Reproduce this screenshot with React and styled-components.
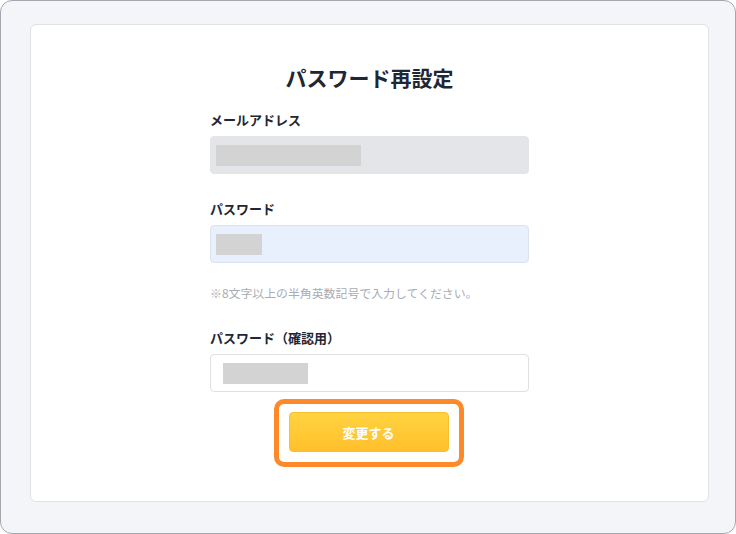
import React from "react";
import styled, { createGlobalStyle } from "styled-components";

const Global = createGlobalStyle`
  html, body { margin: 0; padding: 0; background: #ffffff; }
  body { font-family: "Noto Sans CJK JP", "Noto Sans", sans-serif; }
  * { box-sizing: border-box; }
`;

const Frame = styled.div`
  width: 736px;
  height: 534px;
  border: 1px solid #a3a7ae;
  border-radius: 12px;
  background: #f4f5f9;
  padding: 23px 26px 31px 29px;
  display: flex;
`;

const Card = styled.div`
  flex: 1;
  background: #ffffff;
  border: 1px solid #e1e2e6;
  border-radius: 6px;
  display: flex;
  flex-direction: column;
  align-items: center;
  padding-top: 38px;
`;

const Title = styled.h1`
  margin: 0;
  font-size: 21px;
  line-height: 28px;
  font-weight: 700;
  color: #1e2733;
`;

const Form = styled.div`
  width: 319px;
  display: flex;
  flex-direction: column;
  margin-top: 19px;
`;

const Label = styled.div`
  font-size: 13px;
  line-height: 20px;
  font-weight: 700;
  color: #1e2733;
  margin-top: ${(p) => p.$mt || 0}px;
  margin-bottom: 6px;
`;

const Field = styled.div`
  height: 38px;
  border-radius: 4px;
  border: 1px solid ${(p) => p.$border};
  background: ${(p) => p.$bg};
  display: flex;
  align-items: center;
  padding-left: ${(p) => p.$pad}px;
`;

const Mask = styled.div`
  height: 21px;
  background: #d3d3d3;
`;

const Hint = styled.div`
  margin-top: 21px;
  font-size: 11.9px;
  line-height: 18px;
  color: #a9acb2;
`;

const Outline = styled.div`
  margin-top: 7px;
  align-self: center;
  margin-left: -2px;
  border: 5px solid #fd8a2a;
  border-radius: 10px;
  padding: 8px 10px 10px;
  background: #ffffff;
`;

const Button = styled.button`
  width: 160px;
  height: 40px;
  border: 1px solid #f7c032;
  border-radius: 4px;
  background: linear-gradient(#ffd33f, #ffc02c);
  color: #ffffff;
  font-family: "Noto Sans CJK JP", sans-serif;
  font-size: 13px;
  font-weight: 700;
  display: flex;
  align-items: center;
  justify-content: center;
  cursor: pointer;
`;

export default function App() {
  return (
    <>
      <Global />
      <Frame>
        <Card>
          <Title>パスワード再設定</Title>
          <Form>
            <Label>メールアドレス</Label>
            <Field $bg="#e4e5e9" $border="#e4e5e9" $pad={5}>
              <Mask style={{ width: 145 }} />
            </Field>
            <Label $mt={25}>パスワード</Label>
            <Field $bg="#e8f0fd" $border="#dde3ee" $pad={5}>
              <Mask style={{ width: 46 }} />
            </Field>
            <Hint>※8文字以上の半角英数記号で入力してください。</Hint>
            <Label $mt={26}>パスワード（確認用）</Label>
            <Field $bg="#ffffff" $border="#dfe0e4" $pad={12}>
              <Mask style={{ width: 85 }} />
            </Field>
            <Outline>
              <Button>変更する</Button>
            </Outline>
          </Form>
        </Card>
      </Frame>
    </>
  );
}
